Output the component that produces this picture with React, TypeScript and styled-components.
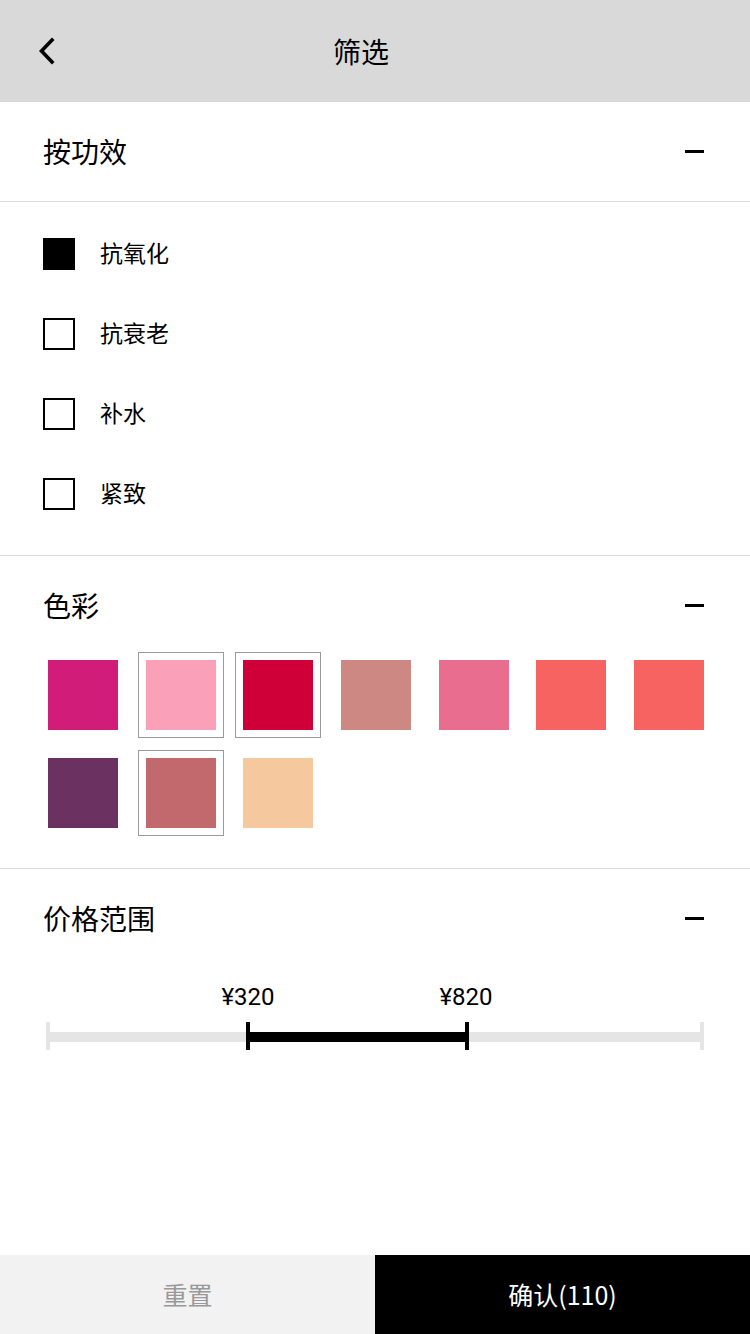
import React from "react";
import styled, { createGlobalStyle } from "styled-components";

const GlobalStyle = createGlobalStyle`
  * { box-sizing: border-box; }
  html, body { margin: 0; padding: 0; background: #fff; }
  body {
    font-family: "Noto Sans CJK SC", "Noto Sans", Roboto, sans-serif;
    color: #000;
    -webkit-font-smoothing: antialiased;
  }
`;

const Page = styled.div`
  width: 750px;
  min-height: 1334px;
  display: flex;
  flex-direction: column;
  background: #fff;
`;

const NavBar = styled.header`
  height: 102px;
  background: #d9d9d9;
  display: grid;
  grid-template-columns: 100px 1fr 128px;
  align-items: center;
`;

const BackButton = styled.button`
  border: none;
  background: transparent;
  padding: 0 0 0 36px;
  height: 102px;
  display: flex;
  align-items: center;
  cursor: pointer;
`;

const NavTitle = styled.h1`
  margin: 0;
  text-align: center;
  font-size: 28px;
  font-weight: 400;
  line-height: 1;
`;

const Section = styled.section`
  border-bottom: 1px solid #dcdcdc;
  display: flex;
  flex-direction: column;
`;

const SectionHead = styled.div`
  height: 99px;
  padding: 0 46px 0 43px;
  display: flex;
  align-items: center;
  justify-content: space-between;
`;

const SectionTitle = styled.h2`
  margin: 0 0 2px 0;
  font-size: 28px;
  font-weight: 400;
  line-height: 1;
`;

const Minus = styled.span`
  width: 19px;
  height: 3px;
  background: #000;
  display: block;
`;

const CheckList = styled.div`
  display: flex;
  flex-direction: column;
  padding: 12px 0 21px 43px;
  border-top: 1px solid #dcdcdc;
`;

const CheckRow = styled.label`
  height: 80px;
  display: flex;
  align-items: center;
  gap: 25px;
  font-size: 23px;
  line-height: 1;
  cursor: pointer;
`;

const CheckText = styled.span`
  padding-bottom: 4px;
`;

const Box = styled.span<{ $checked?: boolean }>`
  width: 32px;
  height: 32px;
  border: 2px solid #000;
  background: ${(p) => (p.$checked ? "#000" : "#fff")};
  display: block;
`;

const SwatchGrid = styled.div`
  display: grid;
  grid-template-columns: repeat(7, 70px);
  column-gap: 27.7px;
  row-gap: 28px;
  padding: 5px 0 40px 48px;
`;

const Swatch = styled.div<{ $color: string; $selected?: boolean }>`
  width: 70px;
  height: 70px;
  background: ${(p) => p.$color};
  box-shadow: ${(p) =>
    p.$selected ? "0 0 0 7px #fff, 0 0 0 8px #9a9a9a" : "none"};
`;

const PriceArea = styled.div`
  height: 286px;
  padding: 17px 46px 0 46px;
`;

const Slider = styled.div`
  position: relative;
  height: 82px;
`;

const PriceLabel = styled.span`
  position: absolute;
  top: 0;
  transform: translateX(-50%);
  font-family: Roboto, "Noto Sans", sans-serif;
  font-size: 24px;
  line-height: 24px;
  white-space: nowrap;
`;

const Track = styled.div`
  position: absolute;
  left: 0;
  right: 0;
  top: 47px;
  height: 10px;
  background: #e5e5e5;
`;

const EndTick = styled.span<{ $side: "left" | "right" }>`
  position: absolute;
  top: 37px;
  ${(p) => (p.$side === "left" ? "left: 0;" : "right: 0;")}
  width: 4px;
  height: 28px;
  background: #e5e5e5;
`;

const Range = styled.div`
  position: absolute;
  top: 47px;
  height: 10px;
  background: #000;
`;

const Handle = styled.span`
  position: absolute;
  top: 37px;
  width: 4px;
  height: 28px;
  background: #000;
`;

const Footer = styled.footer`
  margin-top: auto;
  height: 79px;
  display: grid;
  grid-template-columns: 1fr 1fr;
`;

const FooterButton = styled.button<{ $primary?: boolean }>`
  border: none;
  margin: 0;
  height: 79px;
  padding: 0 0 2px 0;
  font-family: "Noto Sans CJK SC", Roboto, sans-serif;
  font-size: 25px;
  background: ${(p) => (p.$primary ? "#000" : "#f2f2f2")};
  color: ${(p) => (p.$primary ? "#fff" : "#999")};
  cursor: pointer;
`;

const effects = [
  { label: "抗氧化", checked: true },
  { label: "抗衰老" },
  { label: "补水" },
  { label: "紧致" },
];

const colors = [
  { c: "#d11c79" },
  { c: "#fba0b9", s: true },
  { c: "#ce0037", s: true },
  { c: "#ce8884" },
  { c: "#e96d8f" },
  { c: "#f66360" },
  { c: "#f66360" },
  { c: "#6b3160" },
  { c: "#c2696e", s: true },
  { c: "#f5c99d" },
];

const SLIDER_WIDTH = 658;
const low = { label: "¥320", px: 200 };
const high = { label: "¥820", px: 419 };

export default function App() {
  return (
    <Page>
      <GlobalStyle />
      <NavBar>
        <BackButton aria-label="返回">
          <svg width="24" height="30" viewBox="0 0 24 30">
            <polyline
              points="16,4 5.5,15 16,26"
              fill="none"
              stroke="#000"
              strokeWidth="3.6"
              strokeLinecap="square"
            />
          </svg>
        </BackButton>
        <NavTitle>筛选</NavTitle>
        <span />
      </NavBar>

      <Section>
        <SectionHead>
          <SectionTitle>按功效</SectionTitle>
          <Minus />
        </SectionHead>
        <CheckList>
          {effects.map((e) => (
            <CheckRow key={e.label}>
              <Box $checked={e.checked} />
              <CheckText>{e.label}</CheckText>
            </CheckRow>
          ))}
        </CheckList>
      </Section>

      <Section>
        <SectionHead>
          <SectionTitle>色彩</SectionTitle>
          <Minus />
        </SectionHead>
        <SwatchGrid>
          {colors.map((c, i) => (
            <Swatch key={i} $color={c.c} $selected={c.s} />
          ))}
        </SwatchGrid>
      </Section>

      <SectionHead>
        <SectionTitle>价格范围</SectionTitle>
        <Minus />
      </SectionHead>
      <PriceArea>
        <Slider>
          <PriceLabel style={{ left: low.px + 2 }}>{low.label}</PriceLabel>
          <PriceLabel style={{ left: high.px + 1 }}>{high.label}</PriceLabel>
          <Track />
          <EndTick $side="left" />
          <EndTick $side="right" />
          <Range style={{ left: low.px, width: high.px - low.px + 2 }} />
          <Handle style={{ left: low.px }} />
          <Handle style={{ left: Math.min(high.px, SLIDER_WIDTH - 4) }} />
        </Slider>
      </PriceArea>

      <Footer>
        <FooterButton>重置</FooterButton>
        <FooterButton $primary>确认(110)</FooterButton>
      </Footer>
    </Page>
  );
}
